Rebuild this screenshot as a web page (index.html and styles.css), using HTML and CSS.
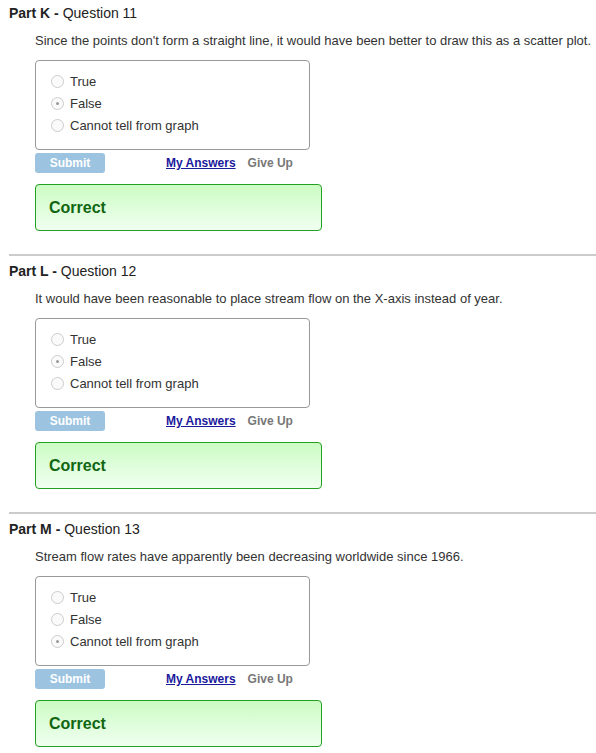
FILE: index.html
```html
<!DOCTYPE html>
<html lang="en">
<head>
    <meta charset="UTF-8">
    <title>Questions</title>
    <link rel="stylesheet" href="styles.css">
</head>
<body>
    <div class="part">
        <h3 class="part-title"><b>Part K -</b> Question 11</h3>
        <p class="prompt">Since the points don't form a straight line, it would have been better to draw this as a scatter plot.</p>
        <div class="choices">
            <div class="choice"><span class="radio"></span>True</div>
            <div class="choice"><span class="radio checked"></span>False</div>
            <div class="choice"><span class="radio"></span>Cannot tell from graph</div>
        </div>
        <div class="actions">
            <button class="submit">Submit</button>
            <a class="my-answers" href="#">My Answers</a>
            <span class="give-up">Give Up</span>
        </div>
        <div class="feedback">Correct</div>
    </div>
    <div class="part">
        <h3 class="part-title"><b>Part L -</b> Question 12</h3>
        <p class="prompt">It would have been reasonable to place stream flow on the X-axis instead of year.</p>
        <div class="choices">
            <div class="choice"><span class="radio"></span>True</div>
            <div class="choice"><span class="radio checked"></span>False</div>
            <div class="choice"><span class="radio"></span>Cannot tell from graph</div>
        </div>
        <div class="actions">
            <button class="submit">Submit</button>
            <a class="my-answers" href="#">My Answers</a>
            <span class="give-up">Give Up</span>
        </div>
        <div class="feedback">Correct</div>
    </div>
    <div class="part">
        <h3 class="part-title"><b>Part M -</b> Question 13</h3>
        <p class="prompt">Stream flow rates have apparently been decreasing worldwide since 1966.</p>
        <div class="choices">
            <div class="choice"><span class="radio"></span>True</div>
            <div class="choice"><span class="radio"></span>False</div>
            <div class="choice"><span class="radio checked"></span>Cannot tell from graph</div>
        </div>
        <div class="actions">
            <button class="submit">Submit</button>
            <a class="my-answers" href="#">My Answers</a>
            <span class="give-up">Give Up</span>
        </div>
        <div class="feedback">Correct</div>
    </div>
</body>
</html>
```
FILE: styles.css
```css
body {
    margin: 0;
    padding-top: 5px;
    font-family: "Liberation Sans", Arial, sans-serif;
    color: #333;
    background: #fff;
}
.part {
    margin-left: 9px;
    padding-bottom: 23px;
    border-bottom: 2px solid #ccc;
    margin-bottom: 7px;
}
.part:last-child {
    border-bottom: none;
}
.part-title {
    margin: 0;
    font-size: 14px;
    line-height: 16px;
    font-weight: normal;
    color: #222;
}
.part-title b {
    font-weight: bold;
}
.prompt {
    margin: 12px 0 0 26px;
    font-size: 13px;
    line-height: 15px;
}
.choices {
    margin: 12px 0 0 26px;
    width: 258px;
    border: 1px solid #999;
    border-radius: 4px;
    padding: 9px 0 13px 15px;
}
.choice {
    display: flex;
    align-items: center;
    height: 22px;
    font-size: 13px;
    color: #333;
}
.radio {
    width: 11px;
    height: 11px;
    border: 1px solid #ccc;
    border-radius: 50%;
    margin-right: 6px;
    position: relative;
    background: #fafafa;
}
.radio.checked::after {
    content: "";
    position: absolute;
    left: 4px;
    top: 4px;
    width: 3px;
    height: 3px;
    border-radius: 50%;
    background: #999;
}
.actions {
    margin: 3px 0 0 26px;
    display: flex;
    align-items: center;
    height: 20px;
    font-size: 12px;
    font-weight: bold;
}
.submit {
    width: 70px;
    height: 20px;
    border: none;
    border-radius: 3px;
    background: #9cc3e0;
    color: #fff;
    font-family: inherit;
    font-size: 12px;
    font-weight: bold;
    padding: 0;
}
.my-answers {
    margin-left: 61px;
    color: #1a1a9c;
}
.give-up {
    margin-left: 12px;
    color: #777;
}
.feedback {
    margin: 11px 0 0 26px;
    width: 272px;
    height: 45px;
    border: 1px solid #22a022;
    border-radius: 4px;
    background: linear-gradient(#ccfcc4, #f0fff0);
    padding-left: 13px;
    display: flex;
    align-items: center;
    font-size: 16px;
    font-weight: bold;
    color: #116611;
}
```
